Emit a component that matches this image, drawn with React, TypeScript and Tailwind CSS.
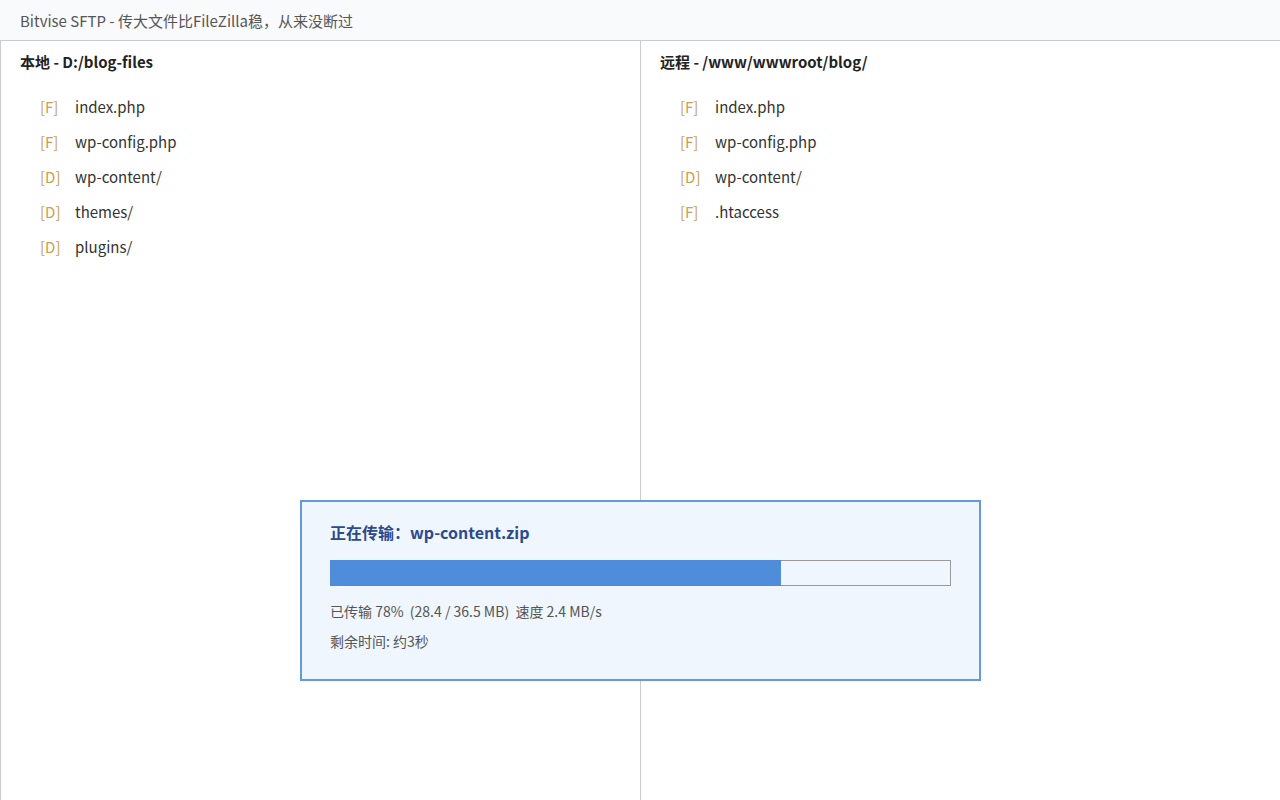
const LOCAL = [
  { tag: "F", name: "index.php" },
  { tag: "F", name: "wp-config.php" },
  { tag: "D", name: "wp-content/" },
  { tag: "D", name: "themes/" },
  { tag: "D", name: "plugins/" },
];

const REMOTE = [
  { tag: "F", name: "index.php" },
  { tag: "F", name: "wp-config.php" },
  { tag: "D", name: "wp-content/" },
  { tag: "F", name: ".htaccess" },
];

type Entry = { tag: string; name: string };

function Pane({ title, items, className }: { title: string; items: Entry[]; className: string }) {
  return (
    <div className={`flex-1 min-w-0 px-[19px] pt-[9px] ${className}`}>
      <div className="text-[15px] font-bold text-[#222] leading-[24px]">{title}</div>
      <ul className="mt-[15px] pl-[20px]">
        {items.map((it) => (
          <li key={it.name} className="flex items-center h-[35px] text-[15px] leading-[24px]">
            <span className="w-[35px] text-[#c9a04e]">[{it.tag}]</span>
            <span className="text-[#333]">{it.name}</span>
          </li>
        ))}
      </ul>
    </div>
  );
}

export default function App() {
  const font = { fontFamily: '"Noto Sans CJK SC", "Noto Sans", sans-serif' };
  return (
    <div className="relative w-[1280px] h-[800px] bg-white overflow-hidden" style={font}>
      <div className="h-[41px] bg-[#f9fafc] border-b border-[#cccccc] px-[20px] flex items-center">
        <span className="text-[15px] text-[#555] leading-[22px] pt-[2px]">
          Bitvise SFTP - 传大文件比FileZilla稳，从来没断过
        </span>
      </div>
      <div className="flex h-[759px]">
        <Pane title="本地 - D:/blog-files" items={LOCAL} className="border-l border-r border-[#cccccc]" />
        <Pane title="远程 - /www/wwwroot/blog/" items={REMOTE} className="" />
      </div>

      <div className="absolute left-[300px] top-[500px] w-[681px] h-[181px] border-2 border-[#6499dd] bg-[#eff6fe] px-[28px] pt-[17px]">
        <div className="text-[16px] font-bold text-[#2c4a8c] leading-[26px] [text-spacing-trim:space-all]">
          正在传输：wp-content.zip
        </div>
        <div className="relative mt-[15px] w-[621px] h-[26px] border border-[#999999]">
          <div className="absolute -top-px -left-px -bottom-px w-[451px] bg-[#4f8ddb]" />
        </div>
        <div className="mt-[14px] text-[14px] text-[#555] leading-[22px]">
          已传输 78%&nbsp; (28.4 / 36.5 MB)&nbsp; 速度 2.4 MB/s
        </div>
        <div className="mt-[8px] text-[14px] text-[#555] leading-[22px]">剩余时间: 约3秒</div>
      </div>
    </div>
  );
}
